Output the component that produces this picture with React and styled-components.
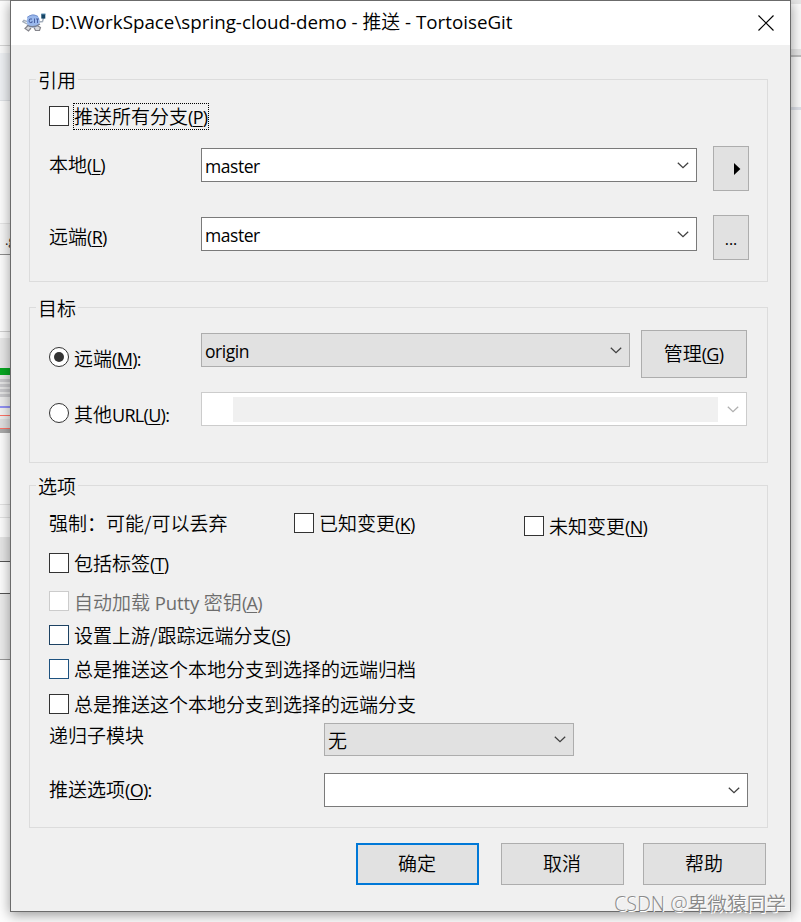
import styled, { createGlobalStyle } from "styled-components";

export default function App() {
  return (
    <>
      <GlobalStyle />
      <Desktop>
        <Strip>
          {leftBands.map(([height, color, text, ink], i) => (
            <Band key={i} $h={height} $color={color} $ink={ink}>
              {text}
            </Band>
          ))}
        </Strip>
        <Dialog>
          <TitleBar>
            <TortoiseIcon />
            <Title>
              D:\WorkSpace\spring-cloud-demo - <span>推送</span> - TortoiseGit
            </Title>
            <CloseIcon />
          </TitleBar>

          <Group $top={34} $height={203}>
            <Legend>引用</Legend>
            <Row $top={11} $height={27}>
              <Check $top={3} />
              <Focus>
                推送所有分支<Key letter="P" />
              </Focus>
            </Row>
            <Row $top={16} $height={45}>
              <Label $top={8}>
                本地<Key letter="L" />
              </Label>
              <Combo $top={2} $width={496}>
                <Value>master</Value>
                <Chevron />
              </Combo>
              <Button $width={36} $height={45} $left={16}>
                <Triangle viewBox="0 0 8 12">
                  <path d="M1 0L7.4 6L1 12Z" fill="#000" />
                </Triangle>
              </Button>
            </Row>
            <Row $top={24} $height={45}>
              <Label $top={11}>
                远端<Key letter="R" />
              </Label>
              <Combo $top={2} $width={496}>
                <Value>master</Value>
                <Chevron />
              </Combo>
              <Button $width={36} $height={45} $left={16}>
                <Dots>...</Dots>
              </Button>
            </Row>
          </Group>

          <Group $top={25} $height={156}>
            <Legend>目标</Legend>
            <Row $top={10} $height={48}>
              <Choice $width={152} $top={17}>
                <Radio>
                  <Bullet />
                </Radio>
                <Text $drop={1}>
                  远端
                  <Key letter="M" />
                  <Latin>:</Latin>
                </Text>
              </Choice>
              <Combo $top={3} $width={429} $tone="gray">
                <Value>origin</Value>
                <Chevron />
              </Combo>
              <Button $width={106} $height={48} $left={11}>
                <span>
                  管理
                  <Key letter="G" />
                </span>
              </Button>
            </Row>
            <Row $top={14} $height={34}>
              <Choice $width={152} $top={11}>
                <Radio />
                <Text $drop={1}>
                  其他<Latin>URL</Latin>
                  <Key letter="U" />
                  <Latin>:</Latin>
                </Text>
              </Choice>
              <Combo $width={546} $tone="disabled">
                <Blank />
                <Chevron color="#b0b0b0" />
              </Combo>
            </Row>
          </Group>

          <Group $top={22} $height={343}>
            <Legend>选项</Legend>
            <Row $top={15} $height={23}>
              <Label $width={245}>强制：可能/可以丢弃</Label>
              <Choice $width={230}>
                <Check />
                <Text>
                  已知变更
                  <Key letter="K" />
                </Text>
              </Choice>
              <Choice $top={3}>
                <Check />
                <Text>
                  未知变更
                  <Key letter="N" />
                </Text>
              </Choice>
            </Row>
            <Row $top={17} $height={20}>
              <Check />
              <Text>
                包括标签
                <Key letter="T" />
              </Text>
            </Row>
            <Row $top={18} $height={20}>
              <Check $color="#cccccc" />
              <Text $muted $drop={1}>
                自动加载<Latin $wide> Putty </Latin>密钥
                <Key letter="A" />
              </Text>
            </Row>
            <Row $top={14} $height={20}>
              <Check $color="#1d4263" />
              <Text>
                设置上游/跟踪远端分支
                <Key letter="S" />
              </Text>
            </Row>
            <Row $top={14} $height={20}>
              <Check $color="#1d5280" />
              <Text>总是推送这个本地分支到选择的远端归档</Text>
            </Row>
            <Row $top={15} $height={20}>
              <Check />
              <Text>总是推送这个本地分支到选择的远端分支</Text>
            </Row>
            <Row $top={9} $height={33}>
              <Label $width={275} $top={2}>
                递归子模块
              </Label>
              <Combo $width={250} $height={33} $tone="gray">
                <Value $cjk>无</Value>
                <Chevron />
              </Combo>
            </Row>
            <Row $top={17} $height={34}>
              <Label $width={275} $top={6}>
                推送选项
                <Key letter="O" />
                <Latin>:</Latin>
              </Label>
              <Combo $width={424}>
                <Chevron />
              </Combo>
            </Row>
          </Group>

          <Footer>
            <Button $width={123} $height={42} $primary>
              确定
            </Button>
            <Button $width={123} $height={42} $left={22}>
              取消
            </Button>
            <Button $width={123} $height={42} $left={19}>
              帮助
            </Button>
          </Footer>
        </Dialog>
        <Strip>
          {rightBands.map(([height, color], i) => (
            <Band key={i} $h={height} $color={color} />
          ))}
        </Strip>
        <Watermark>CSDN @卑微猿同学</Watermark>
      </Desktop>
    </>
  );
}

// slices of the windows behind the dialog: height, colour, text, text colour
const leftBands = [
  [1, "#cfcfcf"],
  [44, "#fdfdfd"],
  [1, "#d6d6d6"],
  [7, "#fbfbfb"],
  [47, "#eff1f4"],
  [1, "#dfe2e6"],
  [122, "#fdfdfd"],
  [1, "#e6e6e6"],
  [30, "#f7f7f7", ".g", "#222"],
  [1, "#8e8e8e"],
  [76, "#fdfdfd"],
  [1, "#d0d0d0"],
  [6, "#fafafa"],
  [30, "#e9e9e9"],
  [7, "#08a822"],
  [4, "#e9e9e9"],
  [3, "#c9c9cc"],
  [2, "#e6e6e6"],
  [3, "#c9c9cc"],
  [2, "#e6e6e6"],
  [3, "#c9c9cc"],
  [2, "#e6e6e6"],
  [3, "#c9c9cc"],
  [9, "#eeeeee"],
  [2, "#9292f5"],
  [7, "#f2f2f2"],
  [1, "#ff7367"],
  [3, "#eeeeee"],
  [9, "#e0e0e0"],
  [1, "#ff7367"],
  [4, "#aaaaaa"],
  [71, "#fdfdfd"],
  [1, "#e2e2e2"],
  [12, "#fafafa"],
  [1, "#e2e2e2"],
  [19, "#fdfdfd"],
  [24, "#e6e6e6"],
  [1, "#555555"],
  [31, "#fdfdfd"],
  [1, "#555555"],
  [65, "#ececec"],
  [1, "#999999"],
  [262, "#fdfdfd"],
];

const rightBands = [
  [4, "#e6e6e6"],
  [45, "#fafafa"],
  [6, "#e6e6e6"],
  [2, "#bdbdbd"],
  [50, "#fafafa"],
  [3, "#dde0e8"],
  [812, "#fafafa"],
];

function Key({ letter }) {
  return (
    <Latin>
      (<u>{letter}</u>)
    </Latin>
  );
}

function Chevron({ color = "#404040" }) {
  return (
    <Arrow viewBox="0 0 12 7" fill="none" stroke={color}>
      <path d="M0.8 0.7L6 5.7L11.2 0.7" strokeWidth="1.25" />
    </Arrow>
  );
}

function CloseIcon() {
  return (
    <svg width="16" height="16" viewBox="0 0 16 16" stroke="#000">
      <path d="M0.5 0.5L15.5 15.5M15.5 0.5L0.5 15.5" strokeWidth="1.15" />
    </svg>
  );
}

function TortoiseIcon() {
  return (
    <svg width="25" height="20" viewBox="0 0 25 20">
      <path
        d="M5 11L0.8 8.6L2 7.4L5 8.6M17 9L20.5 8.5L21.5 5"
        fill="none"
        stroke="#a3adba"
        strokeWidth="1.4"
      />
      <path
        d="M6 12.5L3 15.5L6.5 18L9 15M15 12.5L18.5 14.5L17.5 17.5L13.5 17.5L12 14.5"
        fill="#d9dade"
        stroke="#85858c"
        strokeWidth="1.2"
      />
      <ellipse cx="11.2" cy="8" rx="6.6" ry="6.6" fill="#9ab8ec" />
      <path d="M5 12Q11 16 18 11" fill="none" stroke="#777f91" strokeWidth="1.3" />
      <path d="M5 4.5Q10 0 16 3.5" fill="none" stroke="#7592cf" />
      <path
        d="M10 6Q6.8 5 7 8Q7.3 10.5 10 9.5V8M12.5 5.5V10M14 6H17M15.5 6V10"
        fill="none"
        stroke="#4a62a3"
        strokeWidth="1"
      />
      <rect x="19.3" y="1" width="4" height="4.6" fill="#154566" />
      <path d="M19.3 1H23.5" stroke="#6394b7" />
    </svg>
  );
}

const GlobalStyle = createGlobalStyle`
  * {
    box-sizing: border-box;
  }
  body {
    margin: 0;
    overflow: hidden;
    font-family: "Noto Sans CJK SC", sans-serif;
    font-size: 19px;
    font-weight: 350;
    color: #000;
  }
  svg {
    display: block;
    flex: none;
  }
`;

const Desktop = styled.div`
  display: flex;
  width: 801px;
  height: 922px;
  background: #fdfdfd;
  overflow: hidden;
  position: relative;
`;

const Strip = styled.div`
  width: 10px;
  height: 922px;
  flex: none;
`;

const Band = styled.div`
  height: ${(p) => p.$h}px;
  background: ${(p) => p.$color};
  color: ${(p) => p.$ink};
  padding-left: 5px;
  font: 13px/32px "Open Sans", sans-serif;
`;

const Dialog = styled.div`
  position: relative;
  flex: none;
  width: 781px;
  height: 912px;
  border: 1px solid #6b6b6b;
  background: #f0f0f0;
  box-shadow: 0 3px 12px rgba(0, 0, 0, 0.4);
`;

const TitleBar = styled.div`
  display: flex;
  align-items: center;
  height: 44px;
  padding: 0 16px 0 11px;
  background: #fff;
`;

const Title = styled.div`
  flex: 1;
  margin-left: 4px;
  font-family: "Open Sans", sans-serif;
  font-weight: 400;
  font-size: 18.8px;
  line-height: 42px;
  height: 44px;
  white-space: pre;

  span {
    font-family: "Noto Sans CJK SC", sans-serif;
    font-weight: 350;
    line-height: 1;
  }
`;

const Group = styled.div`
  width: 739px;
  height: ${(p) => p.$height}px;
  margin: ${(p) => p.$top}px 0 0 18px;
  padding-left: 19px;
  border: 1px solid #dcdcdc;
`;

const Legend = styled.div`
  width: 42px;
  height: 24px;
  margin: -12px 0 0 -13px;
  padding-left: 2px;
  background: #f0f0f0;
  line-height: 23px;
  white-space: nowrap;
`;

const Row = styled.div`
  display: flex;
  align-items: flex-start;
  height: ${(p) => p.$height}px;
  margin-top: ${(p) => p.$top}px;
`;

const Label = styled.div`
  flex: none;
  width: ${(p) => p.$width || 152}px;
  margin-top: ${(p) => p.$top || 0}px;
  line-height: 20px;
  white-space: nowrap;
`;

const Choice = styled.div`
  display: flex;
  flex: none;
  width: ${(p) => (p.$width ? p.$width + "px" : "auto")};
  margin-top: ${(p) => p.$top || 0}px;
`;

const Check = styled.div`
  flex: none;
  width: 20px;
  height: 20px;
  margin-top: ${(p) => p.$top || 0}px;
  border: 1px solid ${(p) => p.$color || "#333"};
  background: #fff;
`;

const Radio = styled.div`
  display: flex;
  align-items: center;
  justify-content: center;
  flex: none;
  width: 20px;
  height: 20px;
  border: 1px solid #333;
  border-radius: 50%;
  background: #fff;
`;

const Bullet = styled.div`
  width: 10px;
  height: 10px;
  border-radius: 50%;
  background: #333;
`;

const Text = styled.div`
  margin: ${(p) => p.$drop || 0}px 0 0 5px;
  line-height: 20px;
  white-space: nowrap;
  color: ${(p) => (p.$muted ? "#6d6d6d" : "#000")};
`;

const Focus = styled.div`
  width: 136px;
  height: 27px;
  margin-left: 4px;
  border: 1px dotted #000;
  line-height: 24px;
  white-space: nowrap;
`;

const Latin = styled.span`
  font-family: "Open Sans", sans-serif;
  font-weight: 400;
  font-size: ${(p) => (p.$wide ? 18.5 : 18)}px;
  letter-spacing: ${(p) => (p.$wide ? -0.1 : -0.7)}px;
  line-height: 1;
  white-space: pre;

  u {
    text-underline-offset: 2px;
    text-decoration-thickness: 1px;
  }
`;

const tones = {
  white: ["#7a7a7a", "#fff"],
  gray: ["#adadad", "#e1e1e1"],
  disabled: ["#cccccc", "#fff"],
};

const Combo = styled.div`
  display: flex;
  align-items: center;
  flex: none;
  width: ${(p) => p.$width}px;
  height: ${(p) => p.$height || 34}px;
  margin-top: ${(p) => p.$top || 0}px;
  padding: 0 7px 0 3px;
  border: 1px solid ${(p) => tones[p.$tone || "white"][0]};
  background: ${(p) => tones[p.$tone || "white"][1]};
`;

const Value = styled.div`
  font-family: ${(p) => (p.$cjk ? "inherit" : '"Open Sans", sans-serif')};
  font-size: ${(p) => (p.$cjk ? 19 : 17.5)}px;
  font-weight: ${(p) => (p.$cjk ? 350 : 400)};
  letter-spacing: ${(p) => (p.$cjk ? 0 : -0.45)}px;
  line-height: 30px;
  padding-top: ${(p) => (p.$cjk ? 0 : 2)}px;
`;

const Blank = styled.div`
  width: 485px;
  height: 25px;
  margin-left: 28px;
  background: #f0f0f0;
`;

const Arrow = styled.svg`
  width: 12px;
  height: 7px;
  margin-left: auto;
`;

const Button = styled.div`
  display: flex;
  align-items: center;
  justify-content: center;
  flex: none;
  width: ${(p) => p.$width}px;
  height: ${(p) => p.$height}px;
  margin-left: ${(p) => p.$left || 0}px;
  padding: 0 1px 3px 0;
  border: ${(p) => (p.$primary ? "2px solid #0078d7" : "1px solid #adadad")};
  background: #e1e1e1;
  white-space: nowrap;
`;

const Triangle = styled.svg`
  width: 8px;
  height: 12px;
  margin: 3px 0 0 12px;
`;

const Dots = styled.span`
  font: 400 16px/20px "Open Sans", sans-serif;
  padding: 6px 0 0 1px;
`;

const Footer = styled.div`
  display: flex;
  margin: 15px 0 0 345px;
`;

const Watermark = styled.div`
  position: absolute;
  left: 614px;
  top: 890px;
  font-family: "Open Sans", "Noto Sans CJK SC", sans-serif;
  font-size: 19.7px;
  line-height: 28px;
  color: #8a8a8a;
  text-shadow: 1px 1px 0 #fff;
  white-space: nowrap;
`;
